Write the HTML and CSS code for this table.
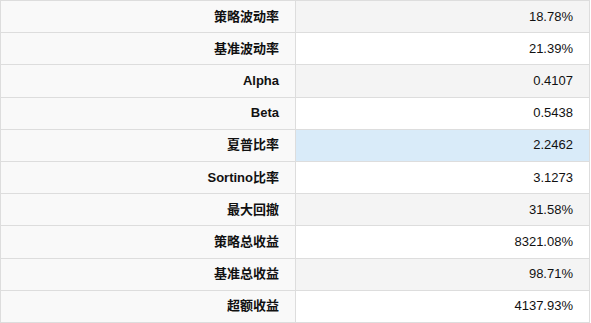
FILE: index.html
```html
<!DOCTYPE html>
<html lang="zh">
<head>
<meta charset="utf-8">
<link rel="stylesheet" href="styles.css">
</head>
<body>
<table class="stats">
  <tbody>
    <tr class="odd"><th>策略波动率</th><td>18.78%</td></tr>
    <tr><th>基准波动率</th><td>21.39%</td></tr>
    <tr class="odd"><th>Alpha</th><td>0.4107</td></tr>
    <tr><th>Beta</th><td>0.5438</td></tr>
    <tr class="hl"><th>夏普比率</th><td>2.2462</td></tr>
    <tr><th>Sortino比率</th><td>3.1273</td></tr>
    <tr class="odd"><th>最大回撤</th><td>31.58%</td></tr>
    <tr><th>策略总收益</th><td>8321.08%</td></tr>
    <tr class="odd"><th>基准总收益</th><td>98.71%</td></tr>
    <tr><th>超额收益</th><td>4137.93%</td></tr>
  </tbody>
</table>
</body>
</html>
```
FILE: styles.css
```css
html, body {
  margin: 0;
  padding: 0;
  background: #fff;
}
.stats {
  border-collapse: collapse;
  width: 590px;
  table-layout: fixed;
  font-family: "Liberation Sans", Arial, "Noto Sans CJK SC", sans-serif;
  font-size: 13px;
  color: #111;
}
.stats th, .stats td {
  border: 1px solid #ddd;
  height: 32.2px;
  padding: 0 16px 0 8px;
  text-align: right;
  line-height: 16px;
  box-sizing: border-box;
}
.stats th {
  width: 295px;
  font-weight: bold;
  background: #f9f9f9;
}
.stats td {
  font-weight: normal;
  background: #fff;
}
.stats tr.odd td {
  background: #f4f4f4;
}
.stats tr.hl td {
  background: #d9ebf9;
}
```
